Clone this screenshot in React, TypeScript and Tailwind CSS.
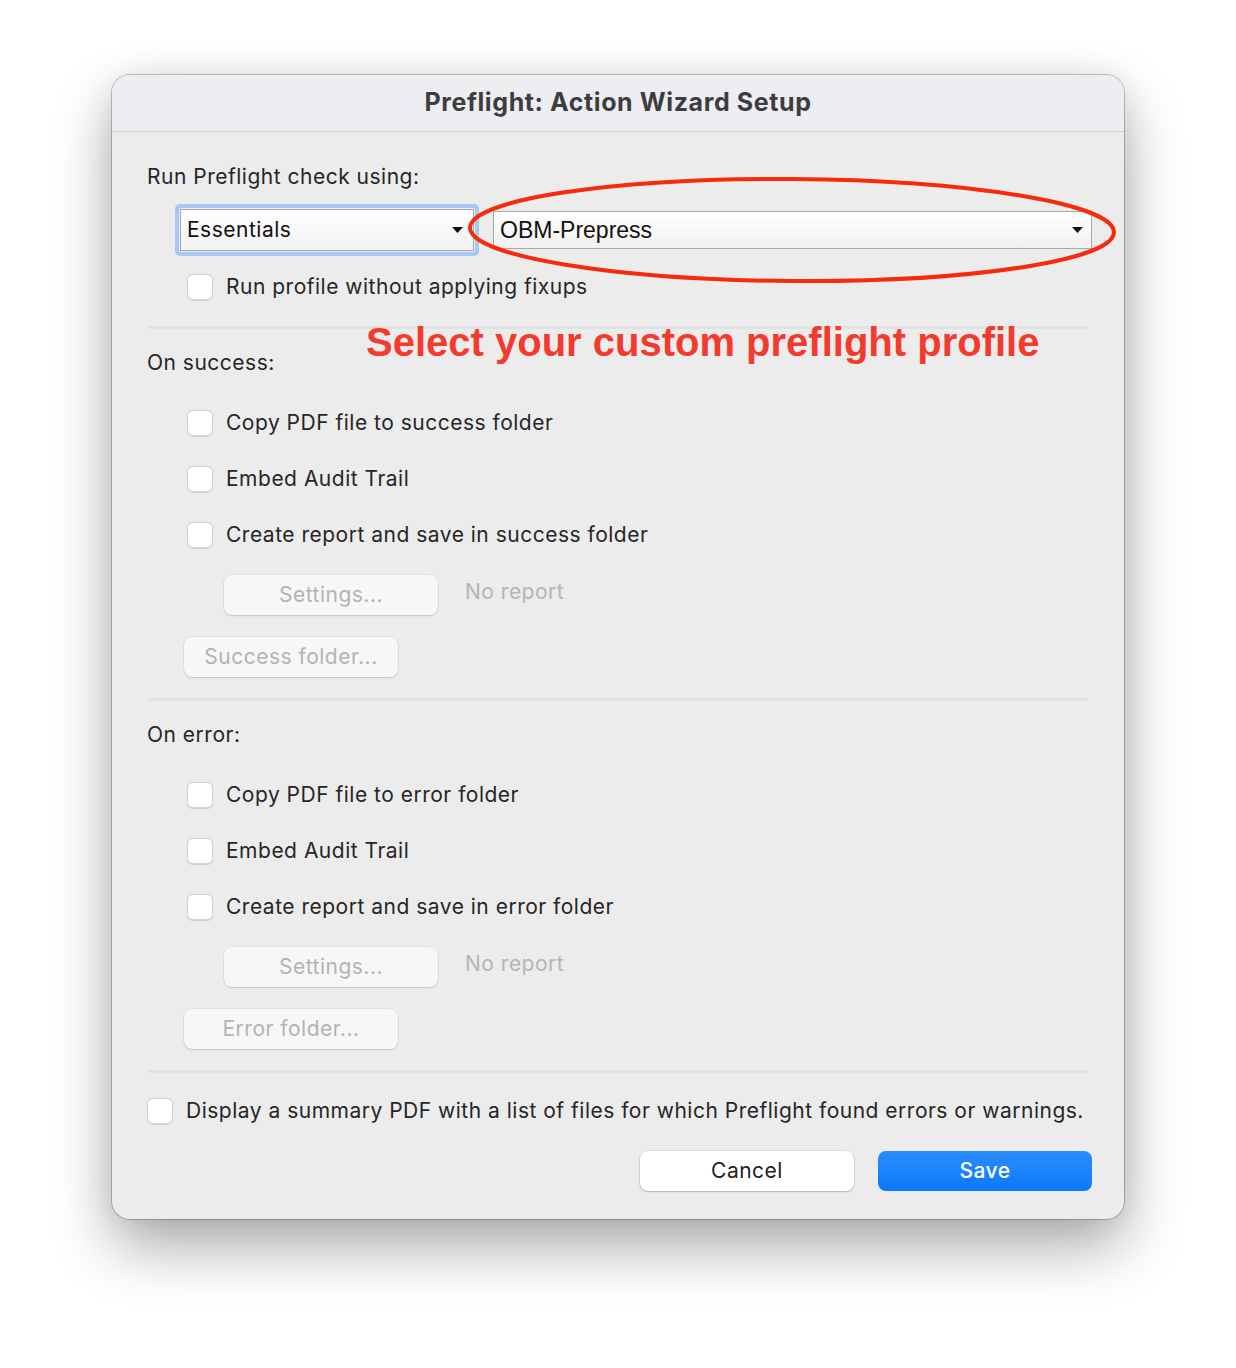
import React from "react";

const SF = { fontFamily: 'Inter, "Noto Sans", sans-serif' };

function Checkbox() {
  return (
    <div className="w-[26px] h-[26px] shrink-0 rounded-[6px] bg-white border border-[#d3d3d3] shadow-[0_0.5px_1px_rgba(0,0,0,0.12)]" />
  );
}

function CheckRow({ label }: { label: string }) {
  return (
    <div className="flex items-center h-[28px] pl-[40px]">
      <Checkbox />
      <span className="ml-[13px] text-[21px] tracking-[0.5px] text-[#262626] leading-[28px]">{label}</span>
    </div>
  );
}

function DisabledButton({ label, className }: { label: string; className?: string }) {
  return (
    <div
      className={
        "w-[214px] h-[40px] rounded-[8px] bg-[#f7f7f7] flex items-center justify-center text-[21px] tracking-[0.5px] text-[#b3b3b3] shadow-[0_0_0_0.5px_rgba(0,0,0,0.08),0_1px_1.5px_rgba(0,0,0,0.14)] " +
        (className ?? "")
      }
    >
      {label}
    </div>
  );
}

function Arrow() {
  return (
    <svg width="11" height="6" viewBox="0 0 11 6" className="shrink-0">
      <path d="M0 0 H11 L5.5 6 Z" fill="#111" />
    </svg>
  );
}

function Separator() {
  return <div className="h-[3px] bg-[#e2e2e2] ml-[1px] mr-[4px]" />;
}

function Section({ title, items, folder }: { title: string; items: string[]; folder: string }) {
  return (
    <>
      <div className="mt-[20px] h-[28px] leading-[28px] text-[21px] tracking-[0.5px] text-[#262626]">{title}</div>
      <div className="mt-[32px] flex flex-col gap-[28px]">
        {items.map((t) => (
          <CheckRow key={t} label={t} />
        ))}
      </div>
      <div className="mt-[26px] flex items-center pl-[77px]">
        <DisabledButton label="Settings..." />
        <span className="ml-[27px] text-[21px] tracking-[0.5px] text-[#b5b5b5] -mt-[6px]">No report</span>
      </div>
      <div className="mt-[22px] pl-[37px]">
        <DisabledButton label={folder} />
      </div>
      <div className="mt-[21px]">
        <Separator />
      </div>
    </>
  );
}

export default function App() {
  return (
    <div className="w-[1236px] h-[1368px] bg-white pt-[75px] pl-[112px]" style={SF}>
      <div className="relative w-[1012px] h-[1144px] rounded-[18px] bg-[#ececec] overflow-hidden shadow-[0_0_0_1px_rgba(0,0,0,0.22),0_28px_60px_rgba(0,0,0,0.33),0_0_30px_rgba(0,0,0,0.08)]">
        <div className="h-[57px] bg-[#eeedf2] border-b border-[#cfcfd2] flex items-center justify-center">
          <span className="text-[25px] font-bold text-[#3d3d3f] tracking-[0.6px]">
            Preflight: Action Wizard Setup
          </span>
        </div>
        <div className="pl-[35px] pr-[32px] pt-[31px]">
          <div className="h-[28px] leading-[28px] text-[21px] tracking-[0.5px] text-[#262626]">Run Preflight check using:</div>
          <div className="mt-[13px] flex items-center pl-[28px]">
            <div className="p-[4px] rounded-[5px] bg-[#a7c8f3]">
              <div className="w-[296px] h-[44px] p-[1px] bg-[#ececec] rounded-[2px]">
                <div className="w-full h-full border border-[#a8a8a8] bg-gradient-to-b from-[#ffffff] to-[#f1f1f1] flex items-center pl-[6px] pr-[10px]">
                  <span className="flex-1 text-[21px] tracking-[0.5px] text-[#111]">Essentials</span>
                  <Arrow />
                </div>
              </div>
            </div>
            <div className="ml-[14px] w-[600px] h-[38px] border border-[#a8a8a8] bg-gradient-to-b from-[#ffffff] via-[#f8f8f8] to-[#f1f1f1] flex items-center pl-[6px] pr-[8px]">
              <span
                className="flex-1 text-[23px] text-[#111]"
                style={{ fontFamily: '"Liberation Sans", Arial, sans-serif' }}
              >
                OBM-Prepress
              </span>
              <Arrow />
            </div>
          </div>
          <div className="mt-[17px]">
            <CheckRow label="Run profile without applying fixups" />
          </div>
          <div className="mt-[25px]">
            <Separator />
          </div>

          <Section
            title="On success:"
            items={["Copy PDF file to success folder", "Embed Audit Trail", "Create report and save in success folder"]}
            folder="Success folder..."
          />
          <Section
            title="On error:"
            items={["Copy PDF file to error folder", "Embed Audit Trail", "Create report and save in error folder"]}
            folder="Error folder..."
          />

          <div className="mt-[24px] flex items-center h-[28px]">
            <Checkbox />
            <span className="ml-[13px] text-[21px] tracking-[0.5px] text-[#262626] leading-[28px] whitespace-nowrap">
              Display a summary PDF with a list of files for which Preflight found errors or warnings.
            </span>
          </div>
          <div className="mt-[26px] flex justify-end gap-[24px]">
            <div className="w-[214px] h-[40px] rounded-[8px] bg-white flex items-center justify-center text-[21px] tracking-[0.5px] text-[#222] shadow-[0_0_0_0.5px_rgba(0,0,0,0.12),0_1px_2px_rgba(0,0,0,0.2)]">
              Cancel
            </div>
            <div className="w-[214px] h-[40px] rounded-[8px] bg-gradient-to-b from-[#2a8dfc] to-[#0a78fa] flex items-center justify-center text-[21px] tracking-[0.5px] font-medium text-white">
              Save
            </div>
          </div>
        </div>

        {/* annotation overlay */}
        <svg
          className="absolute left-[350px] top-[98px] pointer-events-none"
          width="660"
          height="116"
          viewBox="0 0 660 116"
        >
          <ellipse
            cx="330"
            cy="57"
            rx="322"
            ry="51"
            fill="none"
            stroke="#f72a0c"
            strokeWidth="4"
            transform="rotate(0.4 330 57)"
          />
        </svg>
        <div
          className="absolute left-[254px] top-[243px] text-[40px] font-bold text-[#f33a2d] leading-[48px] whitespace-nowrap origin-left"
          style={{ fontFamily: '"Liberation Sans", Arial, sans-serif' }}
        >
          Select your custom preflight profile
        </div>
      </div>
    </div>
  );
}
